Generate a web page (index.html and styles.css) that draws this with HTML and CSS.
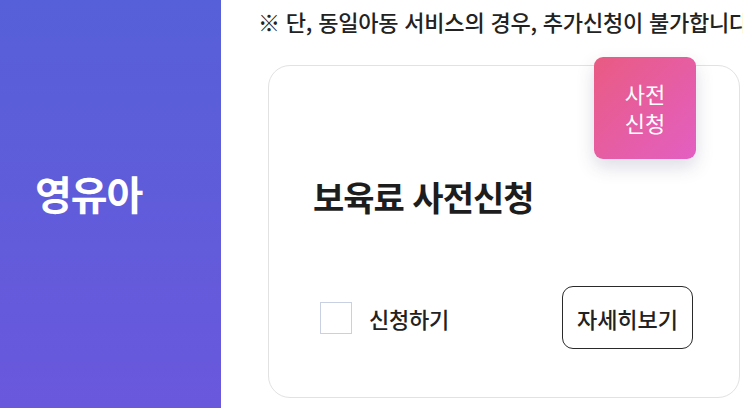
FILE: index.html
```html
<!DOCTYPE html>
<html lang="ko">
<head>
<meta charset="utf-8">
<link rel="stylesheet" href="styles.css">
</head>
<body>
<div class="page">
  <aside class="side">
    <span class="side-title">영유아</span>
  </aside>
  <main class="main">
    <p class="notice">※ 단, 동일아동 서비스의 경우, 추가신청이 불가합니다</p>
    <section class="card">
      <div class="badge">사전<br>신청</div>
      <h2 class="card-title">보육료 사전신청</h2>
      <div class="row">
        <label class="check">
          <span class="box"></span>
          <span class="check-label">신청하기</span>
        </label>
        <button class="more">자세히보기</button>
      </div>
    </section>
  </main>
</div>
</body>
</html>
```
FILE: styles.css
```css
* { box-sizing: border-box; }
html, body { margin: 0; padding: 0; }
body {
  width: 743px;
  height: 408px;
  overflow: hidden;
  background: #fff;
  font-family: "Noto Sans CJK KR", "Noto Sans", sans-serif;
  color: #222;
}
.page {
  display: flex;
  height: 408px;
}
.side {
  width: 221px;
  flex: none;
  background: linear-gradient(to bottom, #5660d8, #6a58dc);
  display: flex;
  align-items: center;
  padding-left: 35px;
}
.side-title {
  color: #fff;
  font-size: 40px;
  font-weight: 700;
  letter-spacing: -1px;
  margin-top: -22px;
}
.main {
  flex: 1;
  padding-left: 37px;
  white-space: nowrap;
  overflow: hidden;
}
.notice {
  margin: 5px 0 0 0;
  font-size: 22px;
  line-height: 32px;
  font-weight: 500;
  color: #222;
  letter-spacing: -0.2px;
}
.card {
  position: relative;
  margin: 28px 0 0 10px;
  width: 472px;
  height: 333px;
  border: 1.5px solid #e2e2e2;
  border-radius: 22px;
  padding: 107px 46px 0 44px;
}
.badge {
  position: absolute;
  top: -9px;
  right: 43px;
  width: 102px;
  height: 102px;
  border-radius: 9px;
  background: linear-gradient(135deg, #e95b82, #e35fc2);
  color: #fff;
  font-size: 22px;
  line-height: 29px;
  display: flex;
  align-items: center;
  justify-content: center;
  text-align: center;
  box-shadow: 0 8px 18px rgba(60, 60, 110, 0.18);
}
.card-title {
  margin: 0;
  font-size: 34px;
  line-height: 48px;
  font-weight: 700;
  letter-spacing: -1px;
  color: #1d1d1d;
}
.row {
  display: flex;
  align-items: center;
  justify-content: space-between;
  margin-top: 65px;
  padding-left: 7px;
}
.check {
  display: flex;
  align-items: center;
  gap: 17px;
}
.box {
  width: 32px;
  height: 32px;
  border: 1.5px solid #c9d0e2;
  background: #fff;
}
.check-label {
  font-size: 22px;
  font-weight: 500;
  color: #222;
  letter-spacing: -0.2px;
}
.more {
  width: 131px;
  height: 63px;
  border: 1.5px solid #2a2a2a;
  border-radius: 11px;
  background: #fff;
  font-family: inherit;
  font-size: 22px;
  font-weight: 500;
  color: #222;
  padding: 0;
}
```
